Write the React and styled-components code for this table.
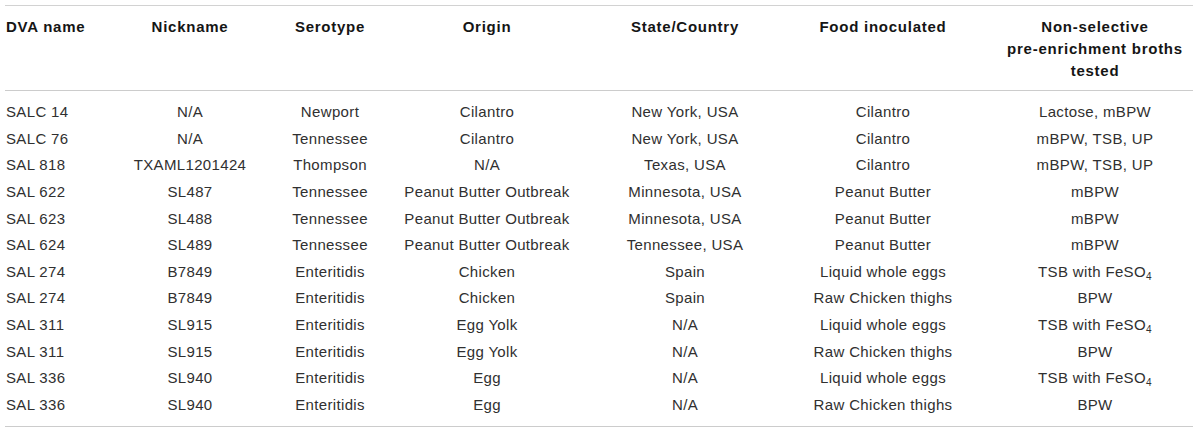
import React from "react";
import styled, { createGlobalStyle } from "styled-components";

const Global = createGlobalStyle`
  html, body { margin: 0; padding: 0; background: #ffffff; }
  body { font-family: "Liberation Sans", Arial, sans-serif; }
`;

const Page = styled.div`
  padding: 5px 7px 0 5px;
  width: 1188px;
`;

const Table = styled.table`
  width: 1188px;
  table-layout: fixed;
  border-collapse: collapse;
  border-top: 1px solid #d2d2d2;
  border-bottom: 1px solid #cccccc;
  font-size: 15px;
`;

const HeadCell = styled.th`
  font-weight: 700;
  color: #151515;
  line-height: 22px;
  letter-spacing: 0.75px;
  vertical-align: top;
  white-space: nowrap;
  padding: 10px 0 8px ${(p) => (p.$left ? "1px" : "0")};
  text-align: ${(p) => (p.$left ? "left" : "center")};
  border-bottom: 1px solid #cccccc;
`;

const Row = styled.tr`
  &:first-child td { padding-top: 8px; }
  &:last-child td { padding-bottom: 7px; }
`;

const Cell = styled.td`
  color: #303030;
  line-height: 26.64px;
  letter-spacing: 0.35px;
  padding: 0 0 0 ${(p) => (p.$left ? "1px" : "0")};
  text-align: ${(p) => (p.$left ? "left" : "center")};
  white-space: nowrap;
`;

const Sub = styled.sub`
  font-size: 10px;
  vertical-align: -3px;
  line-height: 0;
`;

const widths = [88, 194, 86, 228, 168, 228, 196];

const headers = [
  "DVA name",
  "Nickname",
  "Serotype",
  "Origin",
  "State/Country",
  "Food inoculated",
  ["Non-selective", "pre-enrichment broths", "tested"],
];

const FE = "FE";

const rows = [
  ["SALC 14", "N/A", "Newport", "Cilantro", "New York, USA", "Cilantro", "Lactose, mBPW"],
  ["SALC 76", "N/A", "Tennessee", "Cilantro", "New York, USA", "Cilantro", "mBPW, TSB, UP"],
  ["SAL 818", "TXAML1201424", "Thompson", "N/A", "Texas, USA", "Cilantro", "mBPW, TSB, UP"],
  ["SAL 622", "SL487", "Tennessee", "Peanut Butter Outbreak", "Minnesota, USA", "Peanut Butter", "mBPW"],
  ["SAL 623", "SL488", "Tennessee", "Peanut Butter Outbreak", "Minnesota, USA", "Peanut Butter", "mBPW"],
  ["SAL 624", "SL489", "Tennessee", "Peanut Butter Outbreak", "Tennessee, USA", "Peanut Butter", "mBPW"],
  ["SAL 274", "B7849", "Enteritidis", "Chicken", "Spain", "Liquid whole eggs", FE],
  ["SAL 274", "B7849", "Enteritidis", "Chicken", "Spain", "Raw Chicken thighs", "BPW"],
  ["SAL 311", "SL915", "Enteritidis", "Egg Yolk", "N/A", "Liquid whole eggs", FE],
  ["SAL 311", "SL915", "Enteritidis", "Egg Yolk", "N/A", "Raw Chicken thighs", "BPW"],
  ["SAL 336", "SL940", "Enteritidis", "Egg", "N/A", "Liquid whole eggs", FE],
  ["SAL 336", "SL940", "Enteritidis", "Egg", "N/A", "Raw Chicken thighs", "BPW"],
];

function renderValue(v) {
  if (v === FE) {
    return (
      <>
        TSB with FeSO<Sub>4</Sub>
      </>
    );
  }
  return v;
}

export default function App() {
  return (
    <Page>
      <Global />
      <Table>
        <colgroup>
          {widths.map((w, i) => (
            <col key={i} style={{ width: w }} />
          ))}
        </colgroup>
        <thead>
          <tr>
            {headers.map((h, i) => (
              <HeadCell key={i} $left={i === 0}>
                {Array.isArray(h)
                  ? h.map((line, j) => (
                      <React.Fragment key={j}>
                        {line}
                        {j < h.length - 1 && <br />}
                      </React.Fragment>
                    ))
                  : h}
              </HeadCell>
            ))}
          </tr>
        </thead>
        <tbody>
          {rows.map((r, i) => (
            <Row key={i}>
              {r.map((v, j) => (
                <Cell key={j} $left={j === 0}>
                  {renderValue(v)}
                </Cell>
              ))}
            </Row>
          ))}
        </tbody>
      </Table>
    </Page>
  );
}
